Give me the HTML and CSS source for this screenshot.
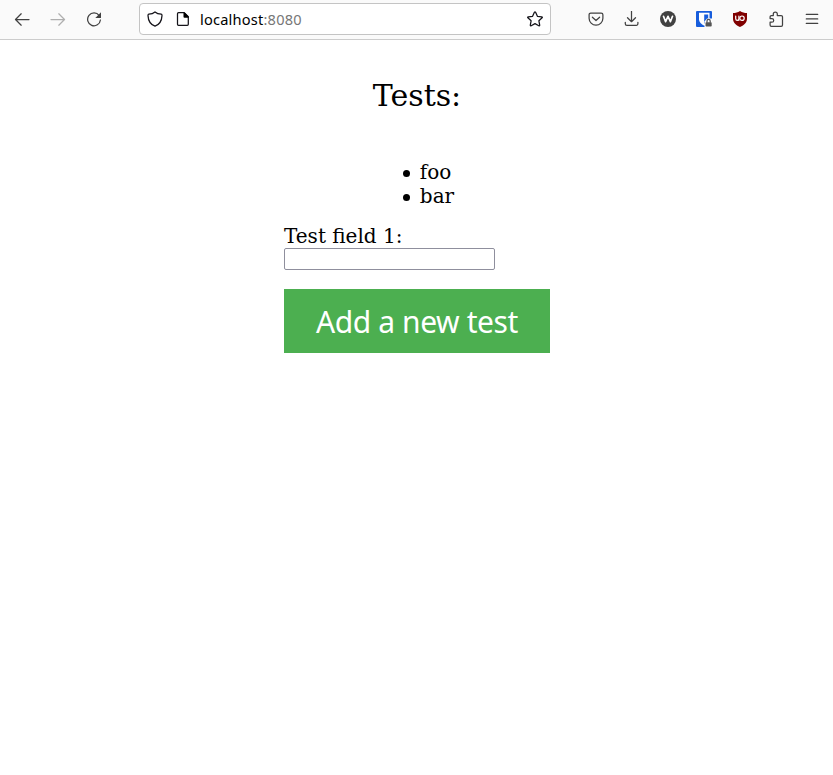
FILE: index.html
```html
<!DOCTYPE html>
<html lang="en">
<head>
<meta charset="utf-8">
<title>Tests</title>
<link rel="stylesheet" href="styles.css">
</head>
<body>
<header class="toolbar">
  <div class="group">
    <span class="tool"><svg viewBox="0 0 16 16"><path d="M15 8.500H1.800M7.200 2.800 1.500 8.500l5.700 5.700"/></svg></span>
    <span class="tool disabled"><svg viewBox="0 0 16 16"><path d="M1 8.500h13.200M8.800 2.800l5.700 5.700-5.700 5.700"/></svg></span>
    <span class="tool"><svg viewBox="0 0 16 16"><path d="M13.200 4.600A6.400 6.400 0 1 0 14.400 9"/><path class="solid" d="M15 1.200v5.200a.6.6 0 0 1-.6.6H9.300z"/></svg></span>
  </div>
  <div class="urlbar">
    <svg class="dark" viewBox="0 0 16 16"><path d="M8 .9C6.300 2.300 4 3 1.800 3.200 1 3.300 1 4 1 4.600 1.200 9 3.300 13.400 8 15.200c4.700-1.800 6.800-6.200 7-10.600 0-.6 0-1.300-.8-1.400C12 3 9.700 2.300 8 .9z"/></svg>
    <svg class="dark page" viewBox="0 0 16 16"><path d="M3.500 1.700h5.700l4.100 4.100v7.500a1 1 0 0 1-1 1H3.500a1 1 0 0 1-1-1V2.700a1 1 0 0 1 1-1z"/><path class="solid" d="M8.500 1.500h1.200l3.900 4v1.200H9.500a1 1 0 0 1-1-1z"/></svg>
    <span class="address">localhost<span class="port">:8080</span></span>
    <svg class="dark star" viewBox="0 0 16 16"><path d="M7.400 1.300Q8 .4 8.600 1.300l1.800 4 4.300.5q1.100.2.400 1l-3.200 3 .8 4.300q.1 1.100-.9.600L8 12.600l-3.800 2.100q-1 .5-.9-.6l.8-4.300-3.200-3q-.7-.8.4-1l4.300-.5z"/></svg>
  </div>
  <div class="group">
    <span class="tool"><svg viewBox="0 0 16 16"><path d="M2.800 2h10.400A1.700 1.700 0 0 1 14.900 3.700v3.500a6.900 6.900 0 0 1-13.800 0V3.700A1.700 1.700 0 0 1 2.800 2zM4.400 6.200 8 9.500l3.600-3.300"/></svg></span>
    <span class="tool"><svg viewBox="0 0 16 16"><path d="M7.500.3v10.200M3.500 6.700l4 4 4-4M1.300 11.300v1.400a1.600 1.600 0 0 0 1.600 1.600h9.400a1.600 1.600 0 0 0 1.600-1.600v-1.400"/></svg></span>
    <span class="tool"><svg viewBox="0 0 16 16"><circle class="disc" cx="8" cy="8" r="8"/><path class="white" d="m3.500 5.300 2.100 5.400L8 5.300l2.400 5.400 2.100-5.400"/></svg></span>
    <span class="tool"><svg viewBox="0 0 16 16"><rect class="blue" width="16" height="16" rx="1"/><path class="paper" d="M3 1.800h10.500v6.400c0 3-2.300 5-5.200 6.600C5.300 13 3 11 3 8.200z"/><path class="blue" d="M8.200 3.400h4v4.800c0 2-1.800 3.300-4 4.600z"/><path class="paper" d="M8.500 10.500 11 7.500h5V16H8.500z"/><rect class="lock" x="9.500" y="11.200" width="6.200" height="4.300" rx=".7"/><path class="shackle" d="M11 11.200V10a1.600 1.600 0 0 1 3.200 0v1.200"/></svg></span>
    <span class="tool"><svg viewBox="0 0 16 16"><path class="red" d="M8 0c2.300 1.600 4.400 2 7 2v5.500c0 4-2.700 6.500-7 8.500-4.300-2-7-4.500-7-8.500V2c2.600 0 4.700-.4 7-2z"/><path class="white thin" d="M3.700 5v2.700a1.600 1.600 0 0 0 3.200 0V5v4.300"/><circle class="white thin" cx="10" cy="7.200" r="2.200"/></svg></span>
    <span class="tool"><svg viewBox="0 0 16 16"><path d="M5.300 4.500V3a2 2 0 0 1 4 0v1.500h3.900a1.300 1.300 0 0 1 1.300 1.300v8.200a1.300 1.300 0 0 1-1.300 1.300H3.400a1.300 1.300 0 0 1-1.300-1.300v-2.800h1.800a1.800 1.800 0 0 0 0-3.600H2.100V5.800a1.300 1.300 0 0 1 1.300-1.300z"/></svg></span>
    <span class="tool"><svg viewBox="0 0 16 16"><path d="M2.300 3.400h11.400M2.300 7.900h11.400M2.300 12.400h11.400"/></svg></span>
  </div>
</header>
<main class="content">
  <h1 class="title">Tests:</h1>
  <ul class="tests">
    <li>foo</li>
    <li>bar</li>
  </ul>
  <form class="form">
    <label for="field">Test field 1:</label>
    <input class="field" id="field" type="text">
    <button class="submit" type="button">Add a new test</button>
  </form>
</main>
</body>
</html>
```

FILE: styles.css
```css
* { box-sizing: border-box; }
body {
  margin: 0;
  background: #fff;
  color: #000;
  font: 20px/24px "DejaVu Serif", serif;
}
.toolbar {
  display: flex;
  align-items: flex-start;
  height: 40px;
  padding: 3px 3px 0 4px;
  background: #fafafa;
  border-bottom: 1px solid #ccc;
}
.group { display: flex; }
.tool {
  display: flex;
  align-items: center;
  justify-content: center;
  width: 36px;
  height: 32px;
}
svg {
  display: block;
  flex: none;
  width: 16px;
  height: 16px;
  fill: none;
  stroke: #414141;
  stroke-width: 1.25;
  stroke-linecap: round;
  stroke-linejoin: round;
}
.disabled { opacity: .4; }
.dark { stroke: #15141a; }
.solid { fill: currentColor; stroke: none; }
.tool .solid { fill: #414141; }
.disc { fill: #414141; stroke: none; }
.lock { fill: #555; stroke: none; }
.shackle { stroke: #555; }
.blue { fill: #175ddc; stroke: none; }
.paper { fill: #fff; stroke: none; }
.red { fill: #800000; stroke: none; }
.white { stroke: #fff; stroke-width: 1.7; }
.thin { stroke-width: 1.2; }
.urlbar {
  display: flex;
  align-items: center;
  width: 412px;
  height: 32px;
  margin: 0 27px;
  padding: 0 7px;
  background: #fff;
  border: 1px solid #c4c4c4;
  border-radius: 4px;
}
.page { margin-left: 12px; }
.address {
  margin-left: 9px;
  font: 14.6px/20px "Noto Sans", sans-serif;
  letter-spacing: .2px;
}
.port { color: #777; }
.star { margin-left: auto; }
.content {
  display: flex;
  flex-direction: column;
  align-items: center;
  padding: 38px 0 0 1px;
}
.title {
  margin: 0;
  font-size: 30px;
  font-weight: 400;
  line-height: 36px;
}
.tests {
  margin: 46px 0 16px;
  padding-left: 40px;
  list-style: none;
}
.tests li { position: relative; }
.tests li::before {
  content: "";
  position: absolute;
  left: -17px;
  top: 10px;
  width: 7px;
  height: 7px;
  border-radius: 50%;
  background: #000;
}
.form {
  display: flex;
  flex-direction: column;
  align-items: flex-start;
}
.field {
  width: 211px;
  height: 22px;
  margin: 0 0 19px;
  padding: 1px 2px;
  background: #fff;
  border: 1px solid #8f8f9d;
  border-radius: 2px;
}
.submit {
  width: 266px;
  height: 64px;
  padding: 1px 0 0;
  background: #4caf50;
  border: 0;
  color: #fff;
  font: 30px/36px "Noto Sans", sans-serif;
  letter-spacing: -.42px;
  white-space: nowrap;
}
```
